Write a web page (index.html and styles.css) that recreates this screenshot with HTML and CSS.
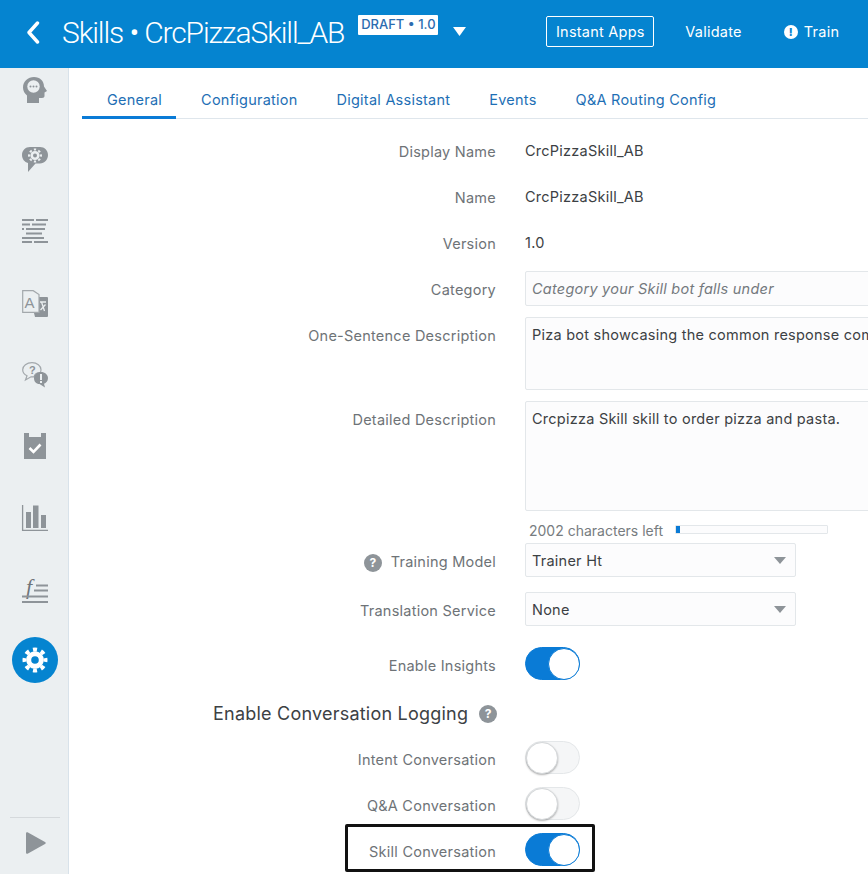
FILE: index.html
```html
<!DOCTYPE html>
<html lang="en">
<head>
<meta charset="utf-8">
<title>Skills</title>
<link rel="stylesheet" href="styles.css">
</head>
<body>
<div class="app">
  <header class="topbar">
    <svg class="back" viewBox="0 0 14 23"><path d="M11.5 2 3 11.5l8.5 9.5" fill="none" stroke="#fff" stroke-width="3.4" stroke-linecap="round" stroke-linejoin="round"/></svg>
    <h1 class="title">Skills • CrcPizzaSkill_AB</h1>
    <span class="badge">DRAFT • 1.0</span>
    <svg class="caret" viewBox="0 0 13 9"><path d="M0 0h13L6.500 9z" fill="#fff"/></svg>
    <div class="actions">
      <button class="btn btn-outline">Instant Apps</button>
      <button class="btn btn-validate">Validate</button>
      <button class="btn btn-train"><span class="alert">!</span>Train</button>
    </div>
  </header>
  <div class="main">
    <aside class="sidebar">
      <nav class="nav">
        <div class="nav-item nav-first">
          <svg class="ico" width="24" height="26" viewBox="0 0 24 26"><path d="M11 0c6 0 10 4 10 9.500l3 4.500-2.500 1.500V19c0 1-1 2-2.500 2h-3v5H4v-7.500C1.500 16.500 0 13.500 0 10.500 0 4.500 5 0 11 0z" fill="#8e9499"/><circle cx="10.500" cy="9.500" r="6.200" fill="#ebeff1"/><g fill="#8e9499"><circle cx="7.500" cy="9.500" r="1"/><circle cx="10.500" cy="9.500" r="1"/><circle cx="13.500" cy="9.500" r="1"/></g></svg>
        </div>
        <div class="nav-item">
          <svg class="ico" width="26" height="25" viewBox="0 0 26 25"><path d="M8 0h10c4.500 0 8 3.500 8 8s-3.500 8.500-8 8.500h-4.500L6 25v-9C2.500 15 0 12 0 8c0-4.500 3.500-8 8-8z" fill="#8e9499"/><circle cx="13" cy="8.500" r="6" fill="none" stroke="#ebeff1" stroke-width="2" pathLength="8" stroke-dasharray=".5 .5" stroke-dashoffset=".25"/><circle cx="13" cy="8.500" r="4.600" fill="#ebeff1"/><circle cx="13" cy="8.500" r="2" fill="#8e9499"/></svg>
        </div>
        <div class="nav-item">
          <svg class="ico" width="26" height="24" viewBox="0 0 26 24"><g fill="#8e9499"><rect x="0" y="0" width="12" height="2"/><rect x="14" y="0" width="12" height="2"/><rect x="0" y="4.500" width="8" height="2"/><rect x="10" y="4.500" width="14" height="2"/><rect x="0" y="9" width="2" height="2"/><rect x="4" y="9" width="19" height="2"/><rect x="4" y="13.500" width="16" height="2"/><rect x="0" y="18" width="22" height="2"/><rect x="0" y="22" width="10" height="2"/><rect x="12" y="22" width="14" height="2"/></g></svg>
        </div>
        <div class="nav-item">
          <svg class="ico" width="26" height="27" viewBox="0 0 26 27"><path d="M14 7h11a1 1 0 0 1 1 1v18a1 1 0 0 1-1 1H13l-1-4z" fill="#8e9499"/><path d="M.7.7h10.500L17 4.500v17.800H.7z" fill="#ebeff1" stroke="#a3a8ac" stroke-width="1.200"/><text x="2.500" y="18" class="ico-a">A</text><path d="M18 12h6M19.500 12l3 9M23.500 14.500l-5 5.500" fill="none" stroke="#ebeff1" stroke-width="1.300"/></svg>
        </div>
        <div class="nav-item">
          <svg class="ico" width="26" height="26" viewBox="0 0 26 26"><path d="M10 .7c5 0 9 3 9 7 0 1-.2 2-.8 2.800-3.200 0-5.700 1.800-6.200 4.300-1 .2-2 .2-3 0L3.500 18l1.500-4.200C2.500 12.500.7 10.300.7 7.700c0-4 4-7 9.300-7z" fill="none" stroke="#a3a8ac" stroke-width="1.200"/><text x="7" y="12" class="ico-q">?</text><path d="M19 10c3.800 0 7 2.700 7 6s-2 5-4 5.800l1 3.800-5.500-3.600C14 22 12 19.500 12 16c0-3.300 3.200-6 7-6z" fill="#8e9499"/><rect x="18" y="12" width="2" height="6" fill="#ebeff1"/><rect x="18" y="19" width="2" height="2" fill="#ebeff1"/></svg>
        </div>
        <div class="nav-item">
          <svg class="ico" width="22" height="26" viewBox="0 0 22 26"><path d="M0 0h5v4h12V0h5v26H0z" fill="#8e9499"/><path d="M5.500 15l4 4 7-7.500" fill="none" stroke="#fff" stroke-width="2.600"/></svg>
        </div>
        <div class="nav-item">
          <svg class="ico" width="26" height="26" viewBox="0 0 26 26"><path d="M.6 0v25.400H26" fill="none" stroke="#8e9499" stroke-width="1.300"/><g fill="#8e9499"><rect x="4" y="7" width="5" height="16"/><rect x="11" y="0.500" width="5.500" height="22.500"/><rect x="19" y="10" width="5" height="13"/></g></svg>
        </div>
        <div class="nav-item">
          <svg class="ico" width="26" height="26" viewBox="0 0 26 26"><text x="4" y="17" class="ico-f">f</text><g fill="#8e9499"><rect x="14" y="7.500" width="12" height="2"/><rect x="12" y="12.500" width="14" height="2"/><rect x="0" y="18.500" width="26" height="2"/><rect x="0" y="24" width="26" height="2"/></g></svg>
        </div>
        <div class="nav-item nav-current">
          <span class="current-disc">
            <svg width="26" height="26" viewBox="0 0 26 26"><circle cx="13" cy="13" r="10.500" fill="none" stroke="#fff" stroke-width="4" pathLength="8" stroke-dasharray=".5 .5" stroke-dashoffset=".25"/><circle cx="13" cy="13" r="6.300" fill="none" stroke="#fff" stroke-width="5"/></svg>
          </span>
        </div>
      </nav>
      <div class="sidebar-foot">
        <svg width="20" height="22" viewBox="0 0 20 22"><path d="M0 1.500C0 .3 1 0 2 .5l17 9.500c1 .6 1 1.400 0 2L2 21.500c-1 .5-2 .2-2-1z" fill="#8e9499"/></svg>
      </div>
    </aside>
    <section class="content">
      <div class="tabs">
        <a class="tab tab-active">General</a>
        <a class="tab">Configuration</a>
        <a class="tab">Digital Assistant</a>
        <a class="tab">Events</a>
        <a class="tab">Q&amp;A Routing Config</a>
      </div>
      <form class="form">
        <div class="row"><div class="label">Display Name</div><div class="value">CrcPizzaSkill_AB</div></div>
        <div class="row"><div class="label">Name</div><div class="value">CrcPizzaSkill_AB</div></div>
        <div class="row"><div class="label">Version</div><div class="value">1.0</div></div>
        <div class="row"><div class="label">Category</div><div class="field field-input placeholder">Category your Skill bot falls under</div></div>
        <div class="row row-auto"><div class="label">One-Sentence Description</div><div class="field field-short">Piza bot showcasing the common response com</div></div>
        <div class="row row-auto"><div class="label">Detailed Description</div><div class="field field-tall">Crcpizza Skill skill to order pizza and pasta.</div></div>
        <div class="counter"><span class="counter-text">2002 characters left</span><span class="meter"><span class="meter-fill"></span></span></div>
        <div class="row row-select"><div class="label"><span class="help">?</span>Training Model</div><div class="select">Trainer Ht<span class="select-arrow"></span></div></div>
        <div class="row row-select"><div class="label">Translation Service</div><div class="select">None<span class="select-arrow"></span></div></div>
        <div class="row row-insights"><div class="label">Enable Insights</div><span class="toggle toggle-on"></span></div>
        <h2 class="subhead">Enable Conversation Logging<span class="help help-head">?</span></h2>
        <div class="row"><div class="label">Intent Conversation</div><span class="toggle"></span></div>
        <div class="row"><div class="label">Q&amp;A Conversation</div><span class="toggle"></span></div>
        <div class="row"><div class="label">Skill Conversation</div><span class="toggle toggle-on"></span><span class="highlight"></span></div>
      </form>
    </section>
  </div>
</div>
</body>
</html>
```

FILE: styles.css
```css
* { box-sizing: border-box; }
html, body { margin: 0; height: 874px; overflow: hidden; background: #fff; }
body { font-family: Inter, "Liberation Sans", sans-serif; font-size: 14.5px; letter-spacing: .24px; color: #3c4144; }
.app { display: flex; flex-direction: column; height: 874px; overflow: hidden; }

.topbar { flex: none; height: 68px; background: #0584d0; display: flex; align-items: center; color: #fff; }
.back { width: 14px; height: 23px; margin-left: 26px; margin-top: -4px; }
.title { margin: -2px 0 0 22px; font-family: Roboto, sans-serif; font-weight: 300; font-size: 30px; letter-spacing: -1.12px; white-space: nowrap; line-height: 40px; }
.badge { margin: -18px 0 0 14px; height: 20px; width: 80px; background: #fff; color: #2b6cb0; font-size: 13px; letter-spacing: 0; font-weight: 500; line-height: 19px; text-align: center; border-radius: 1px; white-space: nowrap; }
.caret { width: 13px; height: 9px; margin: -5px 0 0 15px; }
.actions { display: flex; align-items: center; margin-left: 80px; margin-top: -5px; }
.btn { font: inherit; letter-spacing: inherit; color: #fff; background: none; border: 0; padding: 0; white-space: nowrap; display: flex; align-items: center; }
.btn-outline { width: 108px; height: 31px; border: 1px solid #fff; border-radius: 2px; justify-content: center; }
.btn-validate { margin-left: 31px; }
.btn-train { margin-left: 42px; }
.alert { width: 14px; height: 14px; border-radius: 50%; background: #fff; color: #0584d0; font-size: 11px; font-weight: 800; line-height: 14px; text-align: center; margin-right: 6px; }

.main { flex: 1; display: flex; min-height: 0; }
.sidebar { flex: none; width: 69px; background: #ebeff1; border-right: 1px solid #d8e2ea; display: flex; flex-direction: column; align-items: center; padding: 9px 0 0 2px; }
.nav { display: flex; flex-direction: column; gap: 45.7px; align-items: center; }
.nav-item { height: 26px; display: flex; align-items: center; justify-content: center; }
.nav-first { margin-bottom: -2px; }
.nav-current { margin-top: -2px; }
.ico { display: block; overflow: visible; }
.ico-a { font: 400 15px "Liberation Sans", sans-serif; letter-spacing: 0; fill: #8e9499; }
.ico-q { font: 700 11px "Liberation Sans", sans-serif; letter-spacing: 0; fill: #8e9499; }
.ico-f { font: italic 400 22px "Liberation Serif", serif; letter-spacing: 0; fill: #6f757a; }
.current-disc { width: 46px; height: 46px; flex: none; border-radius: 50%; background: #0584d0; display: flex; align-items: center; justify-content: center; }
.sidebar-foot { margin-top: auto; width: 50px; height: 57px; border-top: 1px solid #d5d9dc; padding: 14px 0 0 16px; margin-left: -1px; }
.sidebar-foot svg { display: block; }

.content { flex: 1; min-width: 0; overflow: hidden; }
.tabs { display: flex; height: 51px; margin-left: 13px; border-bottom: 1px solid #dfe6ec; }
.tab { padding: 22px 14px 0 25px; height: 51px; line-height: 20px; color: #1e6fb5; white-space: nowrap; }
.tab-active { border-bottom: 3px solid #0a7bd6; }

.form { display: flex; flex-direction: column; gap: 11px; padding-top: 14px; }
.row { display: flex; height: 35px; gap: 29px; position: relative; }
.row-auto { height: auto; }
.row-select { height: 38px; }
.row-insights { margin-top: 6px; }
.label { flex: none; width: 427px; text-align: right; padding-top: 9px; line-height: 20px; color: #6e7377; white-space: nowrap; display: flex; justify-content: flex-end; align-items: flex-start; }
.value { padding-top: 8px; line-height: 20px; color: #3c4144; white-space: nowrap; }
.field { flex: none; width: 420px; background: #fcfcfd; border: 1px solid #e3e7ea; border-radius: 2px; padding: 7px 6px; line-height: 20px; white-space: nowrap; overflow: hidden; }
.field-input { height: 35px; }
.field-short { height: 73px; }
.field-tall { height: 110px; }
.placeholder { font-style: italic; color: #74797d; }
.counter { height: 18px; margin: 0 0 -8px 460px; display: flex; align-items: center; line-height: 18px; }
.counter-text { font-size: 14px; letter-spacing: 0; color: #777c80; white-space: nowrap; width: 146px; flex: none; }
.meter { width: 153px; height: 9px; margin-top: -4px; border: 1px solid #e3e7ea; border-radius: 1px; display: block; background: #fcfcfd; }
.meter-fill { display: block; width: 4px; height: 7px; background: #0a7bd6; }
.select { flex: none; width: 271px; height: 34px; background: #fcfcfd; border: 1px solid #e3e7ea; border-radius: 2px; padding: 8px 6px 6px; line-height: 20px; display: flex; justify-content: space-between; align-items: center; }
.select-arrow { width: 0; height: 0; border-left: 6px solid transparent; border-right: 6px solid transparent; border-top: 7px solid #8e9499; margin-right: 3px; margin-top: -2px; }
.help { width: 18px; height: 18px; flex: none; border-radius: 50%; background: #8e9499; color: #fff; font-size: 12px; font-weight: 700; letter-spacing: 0; line-height: 18px; text-align: center; margin: 2px 9px 0 0; }
.subhead { margin: 0 0 0 144px; height: 37px; padding-top: 7px; font-size: 18px; letter-spacing: .22px; font-weight: 400; line-height: 28px; color: #3c4144; display: flex; align-items: flex-start; white-space: nowrap; }
.help-head { margin: 5px 0 0 11px; }
.toggle { flex: none; width: 55px; height: 33px; border-radius: 17px; border: 1px solid #e4e7e9; background: #f5f6f7; position: relative; display: block; }
.toggle::after { content: ""; position: absolute; left: 0; top: 0; width: 30px; height: 30px; border-radius: 50%; background: #fff; border: 1px solid #d5d8da; box-shadow: 0 1px 2px rgba(0,0,0,.3); }
.toggle-on { background: #0a7bd6; border-color: #0a7bd6; }
.toggle-on::after { left: auto; right: -1px; top: 0; border-color: #0a7bd6; box-shadow: none; }
.highlight { position: absolute; left: 276px; top: -9px; width: 250px; height: 48px; border: 3px solid #111; border-radius: 2px; pointer-events: none; }
```
